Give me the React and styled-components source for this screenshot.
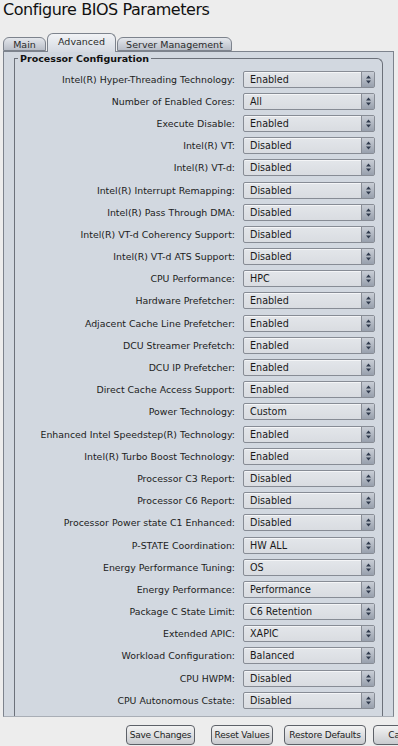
import * as React from "react"
import styled, { createGlobalStyle } from "styled-components"

const GlobalStyle = createGlobalStyle`
  html, body {
    margin: 0;
    padding: 0;
    background: #ededed;
    font-family: "DejaVu Sans", Verdana, sans-serif;
    color: #1e1e1e;
  }
`

const Page = styled.div`
  width: 398px;
  height: 746px;
  overflow: hidden;
  position: relative;
`

const Title = styled.h1`
  margin: 0;
  padding: 0 0 0 3px;
  height: 33px;
  font-size: 16px;
  letter-spacing: -0.45px;
  font-weight: normal;
  line-height: 20px;
  color: #111;
`

const TabBar = styled.div`
  display: flex;
  align-items: flex-end;
  padding-left: 3px;
  height: 18px;
  position: relative;
  z-index: 1;
`

const Tab = styled.div`
  box-sizing: border-box;
  width: ${p => p.w}px;
  height: ${p => (p.active ? 19 : 14)}px;
  margin-right: 1px;
  margin-bottom: ${p => (p.active ? -1 : 0)}px;
  border: 1px solid #7d838d;
  border-bottom: ${p => (p.active ? "none" : "1px solid #7d838d")};
  border-radius: 6px 6px 0 0;
  background: ${p =>
    p.active
      ? "linear-gradient(#f1f3f6, #d5dae2)"
      : "linear-gradient(#e4e7ec, #b9bec8)"};
  font-size: 9.5px;
  line-height: ${p => (p.active ? 16 : 13)}px;
  text-align: center;
  color: #2a2a2a;
`

const Panel = styled.div`
  box-sizing: border-box;
  margin-left: 3px;
  width: 391px;
  height: 666px;
  border: 1px solid #7d838d;
  border-bottom-color: #a9aeb6;
  background: #d2d8e0;
  padding: 6px 0 0 10px;
  overflow: hidden;
`

const Fieldset = styled.div`
  box-sizing: border-box;
  width: 369px;
  border: 1px solid #6c717a;
  border-bottom: none;
  border-radius: 0 6px 0 0;
  height: 660px;
  position: relative;
  padding-top: 9px;
`

const Legend = styled.div`
  position: absolute;
  top: -7px;
  left: 3px;
  padding: 0 2px;
  background: #d2d8e0;
  font-size: 9.5px;
  font-weight: bold;
  line-height: 13px;
  color: #111;
`

const Row = styled.div`
  display: grid;
  grid-template-columns: 220px 132px;
  column-gap: 8px;
  align-items: center;
  height: 22.2px;
`

const Label = styled.div`
  text-align: right;
  font-size: 9.4px;
  white-space: nowrap;
  color: #1c1c1c;
`

const Select = styled.div`
  box-sizing: border-box;
  display: flex;
  height: 17px;
  border: 1px solid #878c95;
  border-radius: 2px;
  background: linear-gradient(#e3e6ea, #d9dce1);
  box-shadow: inset 0 1px 0 #f4f5f7;
`

const Value = styled.div`
  flex: 1;
  padding-left: 6px;
  font-size: 9.6px;
  line-height: 15px;
  color: #1a1a1a;
`

const Spinner = styled.div`
  width: 12px;
  border-left: 1px solid #878c95;
  background: linear-gradient(#c9ced6, #98a0ad);
  display: flex;
  align-items: center;
  justify-content: center;
`

const Footer = styled.div`
  display: flex;
  padding: 8px 0 0 126px;
`

const Button = styled.div`
  box-sizing: border-box;
  flex: none;
  width: ${p => p.w}px;
  margin-right: ${p => p.mr}px;
  height: 20px;
  border: 1px solid #5d6168;
  border-radius: 4px;
  background: linear-gradient(#f3f3f3, #c9cbcf);
  font-size: 9px;
  letter-spacing: -0.2px;
  line-height: 18px;
  text-align: center;
  color: #222;
  white-space: nowrap;
  overflow: hidden;
`

const Arrows = () => (
  <svg width="7" height="11" viewBox="0 0 7 11">
    <path d="M3.5 1.5 L6 4.5 H1 Z" fill="#2f3a4d" />
    <path d="M3.5 9.5 L6 6.5 H1 Z" fill="#2f3a4d" />
  </svg>
)

const settings = [
  ["Intel(R) Hyper-Threading Technology:", "Enabled"],
  ["Number of Enabled Cores:", "All"],
  ["Execute Disable:", "Enabled"],
  ["Intel(R) VT:", "Disabled"],
  ["Intel(R) VT-d:", "Disabled"],
  ["Intel(R) Interrupt Remapping:", "Disabled"],
  ["Intel(R) Pass Through DMA:", "Disabled"],
  ["Intel(R) VT-d Coherency Support:", "Disabled"],
  ["Intel(R) VT-d ATS Support:", "Disabled"],
  ["CPU Performance:", "HPC"],
  ["Hardware Prefetcher:", "Enabled"],
  ["Adjacent Cache Line Prefetcher:", "Enabled"],
  ["DCU Streamer Prefetch:", "Enabled"],
  ["DCU IP Prefetcher:", "Enabled"],
  ["Direct Cache Access Support:", "Enabled"],
  ["Power Technology:", "Custom"],
  ["Enhanced Intel Speedstep(R) Technology:", "Enabled"],
  ["Intel(R) Turbo Boost Technology:", "Enabled"],
  ["Processor C3 Report:", "Disabled"],
  ["Processor C6 Report:", "Disabled"],
  ["Processor Power state C1 Enhanced:", "Disabled"],
  ["P-STATE Coordination:", "HW ALL"],
  ["Energy Performance Tuning:", "OS"],
  ["Energy Performance:", "Performance"],
  ["Package C State Limit:", "C6 Retention"],
  ["Extended APIC:", "XAPIC"],
  ["Workload Configuration:", "Balanced"],
  ["CPU HWPM:", "Disabled"],
  ["CPU Autonomous Cstate:", "Disabled"],
]

const App = () => (
  <Page>
    <GlobalStyle />
    <Title>Configure BIOS Parameters</Title>
    <TabBar>
      <Tab w={43}>Main</Tab>
      <Tab w={69} active>Advanced</Tab>
      <Tab w={115}>Server Management</Tab>
    </TabBar>
    <Panel>
      <Fieldset>
        <Legend>Processor Configuration</Legend>
        {settings.map(([label, value]) => (
          <Row key={label}>
            <Label>{label}</Label>
            <Select>
              <Value>{value}</Value>
              <Spinner><Arrows /></Spinner>
            </Select>
          </Row>
        ))}
      </Fieldset>
    </Panel>
    <Footer>
      <Button w={69} mr={16}>Save Changes</Button>
      <Button w={62} mr={11}>Reset Values</Button>
      <Button w={82} mr={7}>Restore Defaults</Button>
      <Button w={60} mr={0}>Cancel</Button>
    </Footer>
  </Page>
)

export default App
